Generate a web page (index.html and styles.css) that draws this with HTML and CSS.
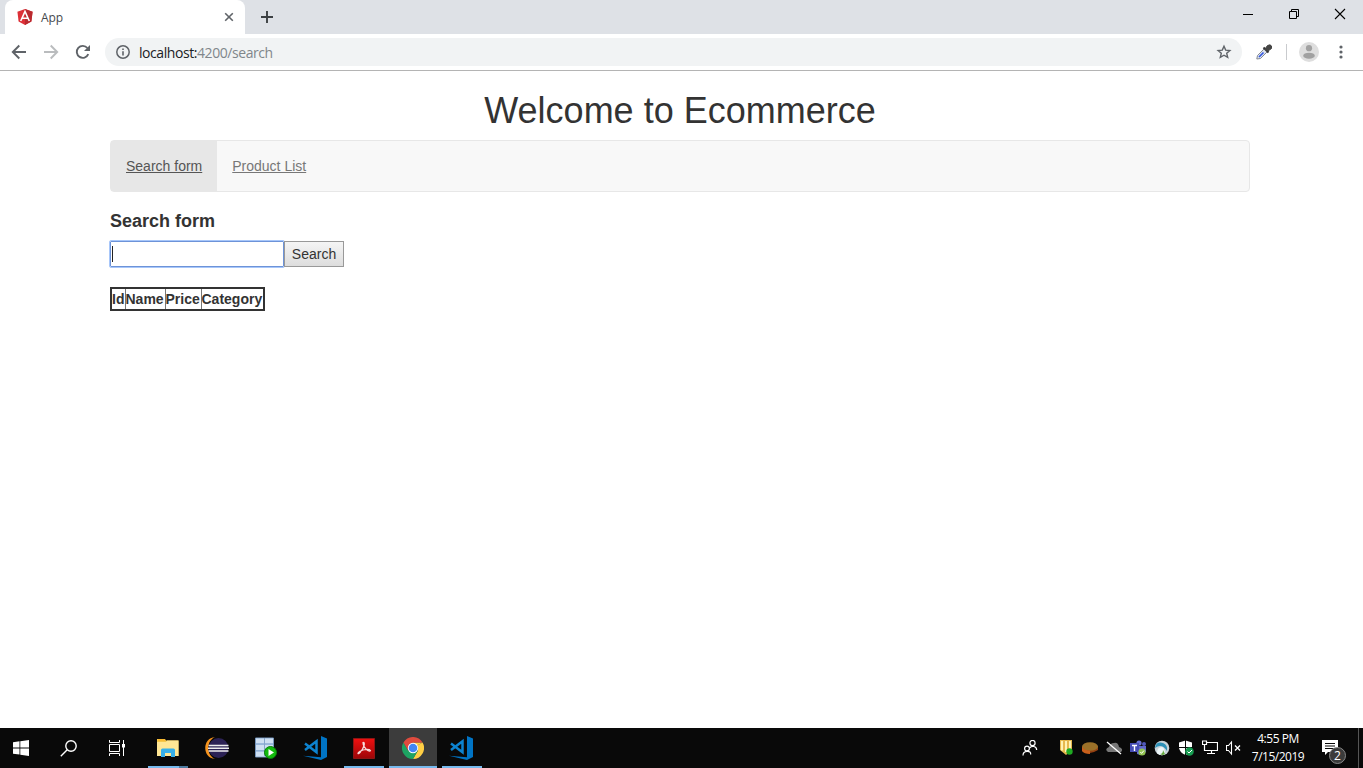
FILE: index.html
```html
<!DOCTYPE html>
<html lang="en">
<head>
<meta charset="utf-8">
<title>App</title>
<link rel="stylesheet" href="styles.css">
</head>
<body>
<header class="tabstrip">
  <div class="tab">
    <svg class="favicon" width="16" height="16" viewBox="0 0 16 16"><path fill="#dd3037" d="M8 0 15.6 2.700 14.4 12.600 8 16 1.600 12.600.4 2.700Z"/><path fill="#b9292f" d="M8 0 15.600 2.700 14.400 12.600 8 16Z"/><path fill="none" stroke="#fff" stroke-width="1.600" d="M3.700 12 8 2.400 12.300 12M5.500 9.200h5"/></svg>
    <span class="tab-title">App</span>
    <svg width="10" height="10" viewBox="0 0 10 10"><path d="M1.200 1.200 8.800 8.800M8.800 1.200 1.200 8.800" stroke="#5f6368" stroke-width="1.600"/></svg>
  </div>
  <svg class="new-tab" width="12" height="12" viewBox="0 0 12 12"><path d="M6 0v12M0 6h12" stroke="#3c4043" stroke-width="1.900"/></svg>
  <div class="window-buttons">
    <svg width="46" height="28" viewBox="0 0 46 28"><path d="M18 14.500h10" stroke="#000"/></svg>
    <svg width="46" height="28" viewBox="0 0 46 28"><path d="M18.500 11.500h7v7h-7zM20.500 11v-1.500h7v7H26" fill="none" stroke="#000"/></svg>
    <svg width="46" height="28" viewBox="0 0 46 28"><path d="m18 9 10 10M28 9 18 19" stroke="#000" stroke-width="1.100"/></svg>
  </div>
</header>
<div class="toolbar">
  <svg class="back" width="16" height="16" viewBox="0 0 16 16"><path d="M15 8H2M8.300 1.500 1.800 8l6.500 6.500" fill="none" stroke="#5f6368" stroke-width="1.900"/></svg>
  <svg class="forward" width="16" height="16" viewBox="0 0 16 16"><path d="M1 8h13M7.700 1.500 14.200 8l-6.500 6.500" fill="none" stroke="#babcbe" stroke-width="1.900"/></svg>
  <svg class="reload" width="16" height="16" viewBox="0 0 16 16"><path d="M13.300 10.200A6 6 0 1 1 12.400 4" fill="none" stroke="#5f6368" stroke-width="1.900"/><path d="M15 1v6H9z" fill="#5f6368"/></svg>
  <div class="address">
    <svg width="14" height="14" viewBox="0 0 14 14"><circle cx="7" cy="7" r="6.200" fill="none" stroke="#5f6368" stroke-width="1.500"/><path d="M7 6.200v4.200M7 3.500V5" stroke="#5f6368" stroke-width="1.600"/></svg>
    <span class="url">localhost:<span class="path">4200/search</span></span>
    <svg class="star" width="16" height="16" viewBox="0 0 16 16"><path d="m8 2.200 1.700 3.900 4.200.4-3.200 2.800 1 4.100L8 11.200l-3.700 2.200 1-4.100-3.200-2.800 4.200-.4z" fill="none" stroke="#5f6368" stroke-width="1.400"/></svg>
  </div>
  <svg class="picker" width="16" height="16" viewBox="0 0 16 16"><path d="M8.500 4.500 1.500 11.500.8 15l3.700-.5 7-7z" fill="#dce3ee" stroke="#858a94"/><path d="m7.500 8.500-4.500 4.500" stroke="#3558e0" stroke-width="1.700"/><path d="m7.500 3.500 5 5" stroke="#333" stroke-width="2"/><path d="m9 5 2.500-3.500q3-1.500 4 .5v2.500L12 7z" fill="#454545" stroke="#444"/></svg>
  <span class="separator"></span>
  <svg class="avatar" width="20" height="20" viewBox="0 0 20 20"><circle cx="10" cy="10" r="10" fill="#dedede"/><circle cx="10" cy="6.200" r="3.100" fill="#a1a1a1"/><ellipse cx="10" cy="13.700" rx="5.800" ry="3" fill="#a1a1a1"/></svg>
  <svg class="more" width="4" height="14" viewBox="0 0 4 14"><g fill="#5f6368"><circle cx="2" cy="2" r="1.600"/><circle cx="2" cy="7" r="1.600"/><circle cx="2" cy="12" r="1.600"/></g></svg>
</div>
<main class="page">
  <h1>Welcome to Ecommerce</h1>
  <nav class="navbar"><a class="nav-link active">Search form</a><a class="nav-link">Product List</a></nav>
  <h2>Search form</h2>
  <div class="search-row"><div class="search-input"><span class="caret"></span></div><button class="search-button">Search</button></div>
  <table class="products"><colgroup><col class="col-id"><col class="col-name"><col class="col-price"><col class="col-category"></colgroup><tr><th>Id</th><th>Name</th><th>Price</th><th>Category</th></tr></table>
</main>
<footer class="taskbar">
  <div class="task start"><svg width="16" height="16" viewBox="0 0 16 16"><path fill="#fff" d="M0 2.200 6.500 1.300v6.200H0zM7.300 1.200 16 0v7.500H7.300zM0 8.400h6.500v6.200L0 13.700zM7.300 8.400H16V16l-8.700-1.200z"/></svg></div>
  <div class="task search"><svg width="17" height="17" viewBox="0 0 17 17"><g fill="none" stroke="#fff" stroke-width="1.400"><circle cx="11" cy="6" r="5.200"/><path d="M7.200 9.800.8 16.300"/></g></svg></div>
  <div class="task view"><svg width="17" height="16" viewBox="0 0 17 16"><path d="M.5 0v2.500h10V0M.5 16v-2.500h10V16M.5 4.500h10v7H.5zM14.500 0v16" fill="none" stroke="#fff"/><path d="M13 4h3v3.500h-3z" fill="#fff"/></svg></div>
  <div class="task explorer running"><svg width="22" height="19" viewBox="0 0 22 19"><path d="M0 0h8l1 1.500h12.500V17H0z" fill="#f5c84c"/><path d="M0 3h9l1-1.500h11.500V17H0z" fill="#ffe694"/><path d="M1 .5h7v1H1z" fill="#ffae18"/><path d="M4 18V11q0-1.500 1.500-1.500h11q1.500 0 1.500 1.500v7h-4v-4H8v4z" fill="#37afe8"/></svg></div>
  <div class="task eclipse"><svg width="24" height="22" viewBox="0 0 24 22"><path d="M10 0C-3 1-3 21 10 22 1 18 1 4 10 0" fill="#f7941e"/><circle cx="13.500" cy="11" r="10" fill="#2c2255"/><path d="M3.500 8.500h20M3 11.200h21M3.500 13.900h20" stroke="#eee" stroke-width="1.500"/></svg></div>
  <div class="task database"><svg width="22" height="22" viewBox="0 0 22 22"><path d="M.5 1h18v19H.5z" fill="#a9c6e8" stroke="#7595bc"/><path d="M1 1.500h17v4.700H1zM1 8h17v5H1zM1 14.800h17v4.700H1z" fill="#cfe0f2"/><path d="M1 7h17M1 13.800h17M9.500 1v18" stroke="#86a5cb"/><circle cx="15.500" cy="15.500" r="6" fill="#13b90e" stroke="#087c08"/><path d="m13.500 12 5.500 3.500-5.500 3.500z" fill="#fff"/></svg></div>
  <div class="task code"><svg width="24" height="24" viewBox="0 0 24 24"><path d="m18 0 6 2.500V21l-6 3L0 19.700l18 1.600z" fill="#0074c5"/><path d="m2 7.500 11.500 8.700V5.300L2 14" fill="none" stroke="#0d83d0" stroke-width="2.500"/></svg></div>
  <div class="task acrobat running"><svg width="22" height="21" viewBox="0 0 22 21"><defs><linearGradient id="red" x2="0" y2="1"><stop stop-color="#ef1010"/><stop offset="1" stop-color="#9c0608"/></linearGradient></defs><path d="M.5.500h21v20H.5z" fill="url(#red)" stroke="#8e1513"/><path d="M10 4.500c2.500-1 1.500 5-3 10-2.500 2.500-3 .5 0-1.200 4-2.300 9.500-2.300 10.500-.8-1 2.500-7.500-3-7.500-8z" fill="none" stroke="#f6dcdc" stroke-width="1.200"/></svg></div>
  <div class="task chrome running"><svg width="22" height="22" viewBox="0 0 22 22"><path d="m11 11 9.530-5.500A11 11 0 0 1 11 22l5-8.500V5.500z" fill="#ffce44"/><path d="M1.470 5.500A11 11 0 0 0 11 22l4.800-8.300H6.200z" fill="#1da362"/><path d="M11 5.500h9.530L11 11z" fill="#ffce44"/><path d="M1.470 5.500A11 11 0 0 1 20.530 5.500H11L6.200 13.700z" fill="#df4b3e"/><circle cx="11" cy="11" r="5.200" fill="#fff"/><circle cx="11" cy="11" r="4.300" fill="#4285f4"/></svg></div>
  <div class="task code2 running"><svg width="24" height="24" viewBox="0 0 24 24"><path d="m18 0 6 2.500V21l-6 3L0 19.700l18 1.600z" fill="#0074c5"/><path d="m2 7.500 11.500 8.700V5.300L2 14" fill="none" stroke="#0d83d0" stroke-width="2.500"/></svg></div>
  <div class="tray">
    <svg class="people" width="16" height="16" viewBox="0 0 16 16"><g fill="none" stroke="#fff" stroke-width="1.200"><circle cx="5" cy="8.500" r="2.400"/><path d="M1 15.500Q1 11.500 5 11.300T8.700 14.500"/><circle cx="10.500" cy="3" r="2.600"/><path d="M7.500 8q2-2.200 4.500-1.500 2.500.5 2.700 3.500"/></g></svg>
    <svg width="16" height="16" viewBox="0 0 16 16"><path d="M2 0h12v10l-6 5-6-5z" fill="#e6b84e"/><path d="M4 1v9.500M8 1v11M12 1v8" stroke="#fff1b2" stroke-width="2"/><circle cx="11.500" cy="11.500" r="3.200" fill="#1faa22"/></svg>
    <svg width="16" height="16" viewBox="0 0 16 16"><path d="M0 7v4q7 5 16-1V6z" fill="#944012"/><ellipse cx="8" cy="6.500" rx="8" ry="4.300" fill="#9b7129"/><path d="M0 6.500q2 4 8 4V14q-6 0-8-3z" fill="#c9601c"/></svg>
    <svg width="16" height="16" viewBox="0 0 16 16"><path d="M2 12q-4-3 1-5 1-4 5-4 4-1 5 4 5 2 2 5z" fill="#777"/><path d="m1 2 14 12" stroke="#fff" stroke-width="1.300"/></svg>
    <svg width="16" height="16" viewBox="0 0 16 16"><circle cx="9" cy="3" r="2.600" fill="#6870d4"/><circle cx="14" cy="4" r="2" fill="#5058bb"/><path d="M7 6h9v6q-4 4-9 2z" fill="#6067cc"/><path d="M0 3h9v9H0z" fill="#464db6"/><path d="M2 5.500h5M4.500 5.500V11" stroke="#fff" stroke-width="1.400"/><circle cx="12" cy="12" r="3.600" fill="#92c353"/><path d="m10.300 12 1.300 1.400 2.300-2.800" fill="none" stroke="#fff"/></svg>
    <svg width="16" height="16" viewBox="0 0 16 16"><circle cx="8" cy="8" r="7.300" fill="#c9d3d9"/><path d="M1 8Q2 1 9 3q5 2 4 8Q8 3 1 8" fill="#2d91b8"/><path d="M3 13q0-6 5-6 3 1 3 7-4 3-8-1" fill="#eef7fa"/><path d="M6 14q3 0 3-4l2 4q-2 2-5 0" fill="#67a943"/></svg>
    <svg width="16" height="16" viewBox="0 0 16 16"><path d="M7.500.5 14 2.500V8q-1 5-6.500 7Q2 13 1 8V2.500z" fill="#fff"/><path d="M7.500 0v15M1 7.500h13" stroke="#090909"/><circle cx="11.500" cy="11.500" r="4.300" fill="#169b50"/><path d="m9.500 11.500 1.500 1.500 3-3" fill="none" stroke="#fff"/></svg>
    <svg width="16" height="16" viewBox="0 0 16 16"><path d="M4 2.500h11.500v8H2.500V5M9.500 10.500v3M5 13.500h8M.5 1v3.500h4V1z" fill="none" stroke="#fff" stroke-width="1.200"/></svg>
    <svg class="sound" width="16" height="16" viewBox="0 0 16 16"><path d="M.5 5.500h2l3-3.500v12l-3-3.500h-2z" fill="none" stroke="#fff" stroke-width="1.100"/><path d="m9 5.500 5 5m0-5L9 10.500" stroke="#fff" stroke-width="1.300"/></svg>
  </div>
  <div class="clock"><span class="time">4:55 PM</span><span class="date">7/15/2019</span></div>
  <div class="notifications"><svg width="17" height="17" viewBox="0 0 17 17"><path d="M0 0h16v12H6l-3 3v-3H0z" fill="#fff"/><path d="M3 3.500h10M3 6h10M3 8.500h10" stroke="#090909"/></svg><span class="badge">2</span></div>
  <span class="desktop-edge"></span>
</footer>
</body>
</html>
```
FILE: styles.css
```css
* { box-sizing: border-box; }
body { margin: 0; width: 1363px; height: 768px; overflow: hidden; display: flex; flex-direction: column; background: #fff; color: #333; font-family: "Liberation Sans", Arial, sans-serif; font-size: 14px; line-height: 20px; }
svg { display: block; flex: none; }
.tabstrip { height: 34px; flex: none; display: flex; background: #dee1e6; }
.tab { width: 240px; height: 34px; margin-left: 5px; padding: 0 11px 0 12px; display: flex; align-items: center; background: #fff; border-radius: 8px 8px 0 0; }
.tab-title { margin-left: 8px; flex: 1; font: 12px "Open Sans", sans-serif; letter-spacing: -.1px; color: #45494d; }
.new-tab { margin: 11px 0 0 16px; }
.window-buttons { display: flex; margin-left: auto; }
.toolbar { height: 37px; flex: none; display: flex; align-items: center; border-bottom: 1px solid #b4b4b4; padding: 0 19px 0 11px; }
.forward, .reload { margin-left: 16px; }
.address { width: 1137px; height: 28px; margin-left: 14px; padding: 0 10px 0 11px; display: flex; align-items: center; border-radius: 14px; background: #f1f3f4; }
.url { margin-left: 9px; flex: 1; font: 14px "Open Sans", sans-serif; letter-spacing: -.43px; color: #202124; }
.path { color: #80868b; }
.picker { margin-left: 14px; }
.separator { width: 1px; height: 16px; margin-left: 14px; background: #c9cbce; }
.avatar { margin-left: 12px; }
.more { margin-left: 20px; }
.page { flex: 1; width: 1140px; margin-left: 110px; }
h1 { margin: 20px 0 9px; height: 40px; font-size: 36px; line-height: 40px; font-weight: 400; text-align: center; }
.navbar { height: 52px; display: flex; border: 1px solid #e7e7e7; border-radius: 4px; background: #f8f8f8; }
.nav-link { padding: 15px; text-decoration: underline; color: #777; }
.active { background: #e7e7e7; color: #555; }
h2 { margin: 19px 0 10px; font-size: 18px; line-height: 20px; font-weight: 700; }
.search-row { display: flex; height: 26px; }
.search-input { width: 174px; height: 26px; padding: 4px 1px; border: 1px solid #6d93d8; outline: 1px solid #a8c7fa; outline-offset: 0; border-radius: 1px; }
.caret { display: block; width: 1px; height: 16px; background: #222; }
.search-button { width: 60px; height: 26px; padding: 0; border: 1px solid #999; border-radius: 0; background: linear-gradient(#f5f5f5, #ddd); color: #333; font: 14px "Liberation Sans", Arial, sans-serif; }
.products { width: 155px; margin-top: 20px; border: 2px solid #333; border-collapse: collapse; table-layout: fixed; }
.col-id { width: 14px; }
.col-name { width: 40px; }
.col-price { width: 36px; }
.col-category { width: 63px; }
.products th { padding: 0; border: 1px solid #777; font-size: 14px; line-height: 20px; text-align: left; }
.taskbar { height: 40px; flex: none; display: flex; background: #090909; color: #fff; }
.task { height: 40px; display: flex; align-items: center; justify-content: center; flex: none; }
.running { background: linear-gradient(#76b9ed, #76b9ed) center bottom / 40px 2px no-repeat; }
.start { width: 45px; padding-right: 3px; }
.search { width: 48px; padding-right: 1px; }
.view { width: 49px; }
.explorer { width: 51px; background-image: linear-gradient(90deg, #76b9ed 31px, #4d7ba0 31px); }
.eclipse { width: 47px; }
.database { width: 51px; }
.code { width: 48px; padding-right: 1px; }
.acrobat { width: 50px; }
.chrome { width: 48px; background-color: #3c3c3c; background-size: 48px 2px; }
.code2 { width: 49px; padding-right: 1px; }
.tray { display: flex; gap: 8px; align-items: center; margin-left: 536px; }
.people { margin-right: 12px; }
.clock { width: 72px; display: flex; flex-direction: column; align-items: center; padding-top: 2px; font: 12px/18px "Open Sans", sans-serif; letter-spacing: -.45px; }
.date { letter-spacing: -.5px; }
.notifications { position: relative; width: 23px; height: 28px; margin: 12px 0 0 8px; }
.badge { position: absolute; left: 7px; top: 7px; width: 17px; height: 17px; border: 1px solid #888; border-radius: 50%; background: #3b3b3b; font: 12px/15px "Open Sans", sans-serif; text-align: center; }
.tray, .clock { flex: none; }
.desktop-edge { width: 1px; height: 40px; background: #555; margin-left: auto; margin-right: 4px; }
```
